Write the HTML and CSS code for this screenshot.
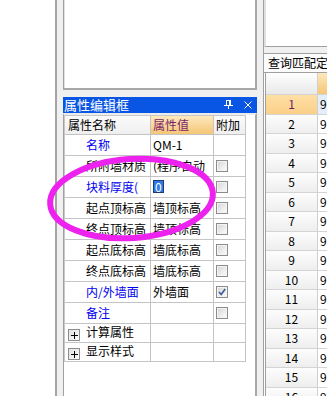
FILE: index.html
```html
<!DOCTYPE html>
<html>
<head>
<meta charset="utf-8">
<link rel="stylesheet" href="styles.css">
</head>
<body>
<div class="screen">
  <div class="outer-left"></div>
  <div class="mid">
    <div class="panel-tl"></div>
    <div class="dock">
      <div class="dock-title">
        <span class="dock-name">属性编辑框</span>
        <svg class="pin" width="9" height="9" viewBox="0 0 9 9"><rect x="2" y="0" width="5" height="1" fill="#fff"/><rect x="2" y="0" width="1" height="5" fill="#fff"/><rect x="5" y="0" width="2" height="5" fill="#fff"/><rect x="0" y="5" width="9" height="1" fill="#fff"/><rect x="4" y="6" width="1" height="3" fill="#fff"/></svg>
        <svg class="close" width="8" height="8" viewBox="0 0 8 8"><path d="M0.5 0.5L7.5 7.5M7.5 0.5L0.5 7.5" stroke="#fff" stroke-width="1" fill="none"/></svg>
      </div>
      <div class="dock-body">
        <table class="props">
          <colgroup><col class="w1"><col class="w2"><col class="w3"></colgroup>
          <tr class="hd"><td class="n">属性名称</td><td class="v sel">属性值</td><td class="a">附加</td></tr>
          <tr><td class="n blue">名称</td><td class="v">QM-1</td><td class="a"></td></tr>
          <tr><td class="n">所附墙材质</td><td class="v">(程序自动</td><td class="a"><span class="cb"></span></td></tr>
          <tr><td class="n blue">块料厚度(</td><td class="v"><span class="edit">0</span></td><td class="a"><span class="cb"></span></td></tr>
          <tr><td class="n">起点顶标高</td><td class="v">墙顶标高</td><td class="a"><span class="cb"></span></td></tr>
          <tr><td class="n">终点顶标高</td><td class="v">墙顶标高</td><td class="a"><span class="cb"></span></td></tr>
          <tr><td class="n">起点底标高</td><td class="v">墙底标高</td><td class="a"><span class="cb"></span></td></tr>
          <tr><td class="n">终点底标高</td><td class="v">墙底标高</td><td class="a"><span class="cb"></span></td></tr>
          <tr><td class="n blue">内/外墙面</td><td class="v">外墙面</td><td class="a"><span class="cb on"><svg width="10" height="10" viewBox="0 0 10 10"><path d="M2 5L4.2 7.5L8.2 2" stroke="#3a5a9c" stroke-width="1.6" fill="none"/></svg></span></td></tr>
          <tr><td class="n blue">备注</td><td class="v"></td><td class="a"><span class="cb"></span></td></tr>
          <tr class="grp"><td class="n"><span class="plus"><svg width="7" height="7" viewBox="0 0 7 7"><rect x="0" y="3" width="7" height="1" fill="#000"/><rect x="3" y="0" width="1" height="7" fill="#000"/></svg></span>计算属性</td><td class="v"></td><td class="a"></td></tr>
          <tr class="grp"><td class="n"><span class="plus"><svg width="7" height="7" viewBox="0 0 7 7"><rect x="0" y="3" width="7" height="1" fill="#000"/><rect x="3" y="0" width="1" height="7" fill="#000"/></svg></span>显示样式</td><td class="v"></td><td class="a"></td></tr>
        </table>
      </div>
    </div>
  </div>
  <div class="right">
    <div class="panel-tr"></div>
    <div class="query">
      <div class="qtitle">查询匹配定</div>
      <div class="qgrid">
        <div class="qrow qhead"><div class="rh"></div><div class="c"></div></div>
        <div class="qrow cur"><div class="rh">1</div><div class="c">9</div></div>
        <div class="qrow"><div class="rh">2</div><div class="c">9</div></div>
        <div class="qrow"><div class="rh">3</div><div class="c">9</div></div>
        <div class="qrow"><div class="rh">4</div><div class="c">9</div></div>
        <div class="qrow"><div class="rh">5</div><div class="c">9</div></div>
        <div class="qrow"><div class="rh">6</div><div class="c">9</div></div>
        <div class="qrow"><div class="rh">7</div><div class="c">9</div></div>
        <div class="qrow"><div class="rh">8</div><div class="c">9</div></div>
        <div class="qrow"><div class="rh">9</div><div class="c">9</div></div>
        <div class="qrow"><div class="rh">10</div><div class="c">9</div></div>
        <div class="qrow"><div class="rh">11</div><div class="c">9</div></div>
        <div class="qrow"><div class="rh">12</div><div class="c">9</div></div>
        <div class="qrow"><div class="rh">13</div><div class="c">9</div></div>
        <div class="qrow"><div class="rh">14</div><div class="c">9</div></div>
        <div class="qrow"><div class="rh">15</div><div class="c">9</div></div>
        <div class="qrow"><div class="rh">16</div><div class="c">9</div></div>
      </div>
    </div>
  </div>
  <svg class="mark" width="327" height="396" viewBox="0 0 327 396"><ellipse cx="131.5" cy="198.5" rx="81.5" ry="39.5" transform="rotate(-4 131.5 198.5)" fill="none" stroke="#ee22ee" stroke-width="6"/></svg>
</div>
</body>
</html>
```
FILE: styles.css
```css
* { box-sizing: border-box; }
html, body { margin: 0; padding: 0; }
body {
  background: #fff;
  font-family: "Noto Sans CJK SC", "Noto Sans", sans-serif;
  font-size: 12px;
  color: #000;
}
.screen {
  position: relative;
  width: 327px;
  height: 396px;
  display: flex;
  overflow: hidden;
  background: #f0f0f0;
}
.outer-left {
  width: 57px;
  flex: none;
  background: #fff;
  border-right: 2px solid #a4a4a4;
}
.mid {
  width: 206px;
  flex: none;
  display: flex;
  flex-direction: column;
  padding: 0 6px;
}
.panel-tl {
  height: 90px;
  flex: none;
  background: #fff;
  border-left: 1px solid #a0a0a0;
  border-right: 2px solid #a8a8a8;
  border-bottom: 2px solid #a8a8a8;
  box-shadow: inset 1px 0 0 #e2e2e2;
}
.dock {
  margin-top: 7px;
  flex: 1;
  display: flex;
  flex-direction: column;
}
.dock-title {
  height: 16px;
  flex: none;
  background: #0a56e4;
  color: #fff;
  font-size: 13px;
  line-height: 16px;
  display: flex;
  align-items: center;
  padding: 0 5px 0 1px;
}
.dock-name { flex: 1; }
.pin { margin-top: -1px; }
.close { margin-left: 11px; }
.dock-body {
  flex: 1;
  background: #fff;
  border-left: 1px solid #a0a0a0;
  border-right: 2px solid #a8a8a8;
  border-top: 2px solid #ececec;
}
.props {
  table-layout: fixed;
  border-collapse: separate;
  border-spacing: 0;
  width: 181px;
  border-left: 1px solid #c8c8c8;
  border-top: 1px solid #c8c8c8;
}
.w1 { width: 86px; }
.w2 { width: 63px; }
.w3 { width: 32px; }
.props td {
  padding: 0;
  border-right: 1px solid #c4c4c4;
  border-bottom: 1px solid #c4c4c4;
  white-space: nowrap;
  overflow: hidden;
  line-height: 14px;
  vertical-align: middle;
}
.props tr { height: 21px; }
.props tr.hd { height: 19px; }
.props tr.grp { height: 19px; }
.hd td { background: linear-gradient(#fbfbfb, #efefef); padding-left: 3px; }
.hd td.sel { background: linear-gradient(#fde8bd, #f5c676); color: #7a1f6a; padding-left: 2px; }
.props td.n { padding-left: 21px; }
.props .hd td.n { padding-left: 3px; }
.props .grp td.n { padding-left: 3px; }
.props td.v { padding-left: 2px; }
.props td.a { padding-left: 2px; }
.blue { color: #0000f0; }
.cb {
  display: block;
  width: 12px;
  height: 12px;
  border: 1px solid #8c8c8c;
  background: linear-gradient(135deg, #d4d4d4, #f2f2f2 70%, #fbfbfb);
  box-shadow: inset 0 0 0 1px #f4f4f4;
}
.cb svg { display: block; margin: 0; }
.edit {
  display: inline-block;
  background: #2f7ae8;
  color: #fff;
  line-height: 11px;
  padding: 0 1px;
  border: 1px solid #1d3b70;
}
.plus {
  display: inline-flex;
  align-items: center;
  justify-content: center;
  width: 12px;
  height: 12px;
  margin-right: 6px;
  vertical-align: -2px;
  border: 1px solid #8e8e8e;
  background: linear-gradient(135deg, #e2e2e2, #fafafa);
}
.plus svg { display: block; }
.right {
  flex: 1;
  border-left: 1px solid #a0a0a0;
  display: flex;
  flex-direction: column;
  min-width: 0;
}
.panel-tr {
  height: 47px;
  flex: none;
  background: #fff;
  border-left: 2px solid #e0e0e0;
  border-bottom: 1px solid #a0a0a0;
}
.query {
  flex: 1;
  margin-top: 6px;
  border-top: 1px solid #a0a0a0;
  background: #fff;
  display: flex;
  flex-direction: column;
  min-width: 0;
}
.qtitle {
  height: 19px;
  flex: none;
  border-bottom: 1px solid #a0a0a0;
  padding-left: 4px;
  line-height: 18px;
  white-space: nowrap;
  overflow: hidden;
  background: #fbfbfb;
}
.qgrid {
  margin-left: 1px;
  border-left: 1px solid #a0a0a0;
  display: flex;
  flex-direction: column;
}
.qrow {
  display: flex;
  height: 19.5px;
  flex: none;
}
.qrow.qhead { height: 22px; }
.rh {
  width: 52px;
  flex: none;
  text-align: center;
  background: linear-gradient(#fdfdfd, #eeeeee);
  border-right: 1px solid #d0d0d0;
  border-bottom: 1px solid #d4d4d4;
  line-height: 18px;
}
.c {
  flex: 1;
  padding-left: 2px;
  border-bottom: 1px solid #d4d4d4;
  line-height: 18px;
  white-space: nowrap;
  overflow: hidden;
}
.qhead .rh { background: linear-gradient(#fefefe, #e9e9e9); }
.qhead .c { background: linear-gradient(#fde8bd, #f5c676); }
.cur .rh { background: linear-gradient(#fedfa4, #fbd088); color: #6a1a6a; }
.cur .c { background: #e4eefb; }
.mark {
  position: absolute;
  left: 0;
  top: 0;
  pointer-events: none;
}
```
